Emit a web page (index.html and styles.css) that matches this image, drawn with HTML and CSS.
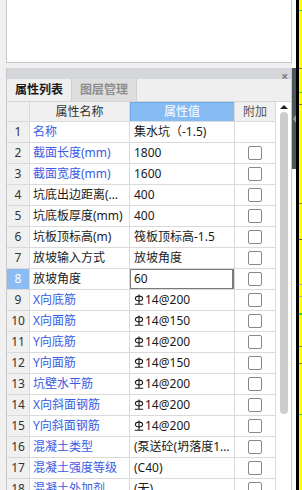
FILE: index.html
```html
<!DOCTYPE html>
<html lang="zh-CN">
<head>
    <meta charset="UTF-8">
    <meta name="viewport" content="width=device-width, initial-scale=1.0">
    <title>属性列表</title>
    <link rel="stylesheet" href="styles.css">
</head>
<body>
    <div class="main">
        <div class="preview"></div>
        <div class="panel">
            <div class="bar"><span class="close">×</span></div>
            <div class="tabs">
                <div class="tab active">属性列表</div>
                <div class="tab">图层管理</div>
            </div>
            <div class="grid">
                <div class="rows">
                    <div class="row head">
                        <div class="num"></div>
                        <div class="name">属性名称</div>
                        <div class="value">属性值</div>
                        <div class="extra">附加</div>
                    </div>
                    <div class="row">
                        <div class="num">1</div>
                        <div class="name blue">名称</div>
                        <div class="value">集水坑（-1.5)</div>
                        <div class="extra"></div>
                    </div>
                    <div class="row">
                        <div class="num">2</div>
                        <div class="name blue">截面长度(mm)</div>
                        <div class="value">1800</div>
                        <div class="extra"><span class="check"></span></div>
                    </div>
                    <div class="row">
                        <div class="num">3</div>
                        <div class="name blue">截面宽度(mm)</div>
                        <div class="value">1600</div>
                        <div class="extra"><span class="check"></span></div>
                    </div>
                    <div class="row">
                        <div class="num">4</div>
                        <div class="name">坑底出边距离(mm)</div>
                        <div class="value">400</div>
                        <div class="extra"><span class="check"></span></div>
                    </div>
                    <div class="row">
                        <div class="num">5</div>
                        <div class="name">坑底板厚度(mm)</div>
                        <div class="value">400</div>
                        <div class="extra"><span class="check"></span></div>
                    </div>
                    <div class="row">
                        <div class="num">6</div>
                        <div class="name">坑板顶标高(m)</div>
                        <div class="value">筏板顶标高-1.5</div>
                        <div class="extra"><span class="check"></span></div>
                    </div>
                    <div class="row">
                        <div class="num">7</div>
                        <div class="name">放坡输入方式</div>
                        <div class="value">放坡角度</div>
                        <div class="extra"><span class="check"></span></div>
                    </div>
                    <div class="row current">
                        <div class="num">8</div>
                        <div class="name">放坡角度</div>
                        <div class="value edit">60</div>
                        <div class="extra"><span class="check"></span></div>
                    </div>
                    <div class="row">
                        <div class="num">9</div>
                        <div class="name blue">X向底筋</div>
                        <div class="value"><svg class="bar-sym" viewBox="0 0 10 11"><ellipse cx="5" cy="4.5" rx="3.6" ry="2.4"/><path d="M5 0.5V10.5M0.8 10.3H9.2"/></svg>14@200</div>
                        <div class="extra"><span class="check"></span></div>
                    </div>
                    <div class="row">
                        <div class="num">10</div>
                        <div class="name blue">X向面筋</div>
                        <div class="value"><svg class="bar-sym" viewBox="0 0 10 11"><ellipse cx="5" cy="4.5" rx="3.6" ry="2.4"/><path d="M5 0.5V10.5M0.8 10.3H9.2"/></svg>14@150</div>
                        <div class="extra"><span class="check"></span></div>
                    </div>
                    <div class="row">
                        <div class="num">11</div>
                        <div class="name blue">Y向底筋</div>
                        <div class="value"><svg class="bar-sym" viewBox="0 0 10 11"><ellipse cx="5" cy="4.5" rx="3.6" ry="2.4"/><path d="M5 0.5V10.5M0.8 10.3H9.2"/></svg>14@200</div>
                        <div class="extra"><span class="check"></span></div>
                    </div>
                    <div class="row">
                        <div class="num">12</div>
                        <div class="name blue">Y向面筋</div>
                        <div class="value"><svg class="bar-sym" viewBox="0 0 10 11"><ellipse cx="5" cy="4.5" rx="3.6" ry="2.4"/><path d="M5 0.5V10.5M0.8 10.3H9.2"/></svg>14@150</div>
                        <div class="extra"><span class="check"></span></div>
                    </div>
                    <div class="row">
                        <div class="num">13</div>
                        <div class="name blue">坑壁水平筋</div>
                        <div class="value"><svg class="bar-sym" viewBox="0 0 10 11"><ellipse cx="5" cy="4.5" rx="3.6" ry="2.4"/><path d="M5 0.5V10.5M0.8 10.3H9.2"/></svg>14@200</div>
                        <div class="extra"><span class="check"></span></div>
                    </div>
                    <div class="row">
                        <div class="num">14</div>
                        <div class="name blue">X向斜面钢筋</div>
                        <div class="value"><svg class="bar-sym" viewBox="0 0 10 11"><ellipse cx="5" cy="4.5" rx="3.6" ry="2.4"/><path d="M5 0.5V10.5M0.8 10.3H9.2"/></svg>14@200</div>
                        <div class="extra"><span class="check"></span></div>
                    </div>
                    <div class="row">
                        <div class="num">15</div>
                        <div class="name blue">Y向斜面钢筋</div>
                        <div class="value"><svg class="bar-sym" viewBox="0 0 10 11"><ellipse cx="5" cy="4.5" rx="3.6" ry="2.4"/><path d="M5 0.5V10.5M0.8 10.3H9.2"/></svg>14@200</div>
                        <div class="extra"><span class="check"></span></div>
                    </div>
                    <div class="row">
                        <div class="num">16</div>
                        <div class="name blue">混凝土类型</div>
                        <div class="value">(泵送砼(坍落度175~190mm))</div>
                        <div class="extra"><span class="check"></span></div>
                    </div>
                    <div class="row">
                        <div class="num">17</div>
                        <div class="name blue">混凝土强度等级</div>
                        <div class="value">(C40)</div>
                        <div class="extra"><span class="check"></span></div>
                    </div>
                    <div class="row">
                        <div class="num">18</div>
                        <div class="name blue">混凝土外加剂</div>
                        <div class="value">(无)</div>
                        <div class="extra"><span class="check"></span></div>
                    </div>
                </div>
                <div class="scroll">
                    <div class="arrow"></div>
                    <div class="thumb"></div>
                </div>
            </div>
        </div>
    </div>
    <div class="splitter">
        <div class="handle"><span class="tri"></span></div>
    </div>
    <div class="edge"></div>
    <div class="ruler"></div>
</body>
</html>
```

FILE: styles.css
```css
body{
    margin: 0;
    width: 302px;
    height: 490px;
    overflow: hidden;
    display: flex;
    background-color: #f0f0f0;
    font-family: "Noto Sans", "Noto Sans CJK SC", sans-serif;
    font-size: 12px;
    color: #1a1a1a;
}

.main{
    width: 286px;
    padding-left: 6px;
    display: flex;
    flex-direction: column;
}

.preview{
    height: 63px;
    box-sizing: border-box;
    background-color: #fff;
    border: 1px solid #c8c8c8;
    border-top: none;
}

.panel{
    margin-top: 5px;
    flex: 1;
    min-height: 0;
    display: flex;
    flex-direction: column;
    background-color: #fff;
    border-left: 1px solid #c8c8c8;
    border-right: 1px solid #c8c8c8;
}

.bar{
    height: 11px;
    background-color: #d4d6da;
    text-align: right;
    padding-right: 3px;
}

.close{
    color: #7d7f83;
    font-size: 12px;
    line-height: 11px;
    font-weight: bold;
}

.tabs{
    height: 22px;
    display: flex;
    background-color: #efefef;
    border-bottom: 1px solid #d6d6d6;
}

.tab{
    width: 64px;
    line-height: 22px;
    text-align: center;
    font-weight: bold;
    color: #8e8e8e;
    background-color: #dedede;
    border-right: 1px solid #d0d0d0;
}

.tab.active{
    color: #1a1a1a;
    background-color: #efefef;
}

.grid{
    flex: 1;
    display: flex;
    overflow: hidden;
}

.rows{
    width: 269px;
}

.row{
    height: 21px;
    display: flex;
    box-sizing: border-box;
    border-bottom: 1px solid #dadada;
}

.row > div{
    box-sizing: border-box;
    border-right: 1px solid #dadada;
    line-height: 20px;
    white-space: nowrap;
    overflow: hidden;
    text-overflow: ellipsis;
}

.num{
    width: 23px;
    text-align: center;
    background-color: #f0f0f0;
    color: #333;
}

.name{
    width: 100px;
    padding-left: 3px;
}

.value{
    width: 105px;
    padding-left: 4px;
    position: relative;
}

.extra{
    width: 41px;
    display: flex;
    justify-content: center;
    align-items: center;
}

.blue{
    color: #3a5be4;
}

.row.head{
    height: 20px;
}

.row.head > div{
    line-height: 19px;
    background-color: #f0f0f0;
    text-align: center;
    padding-left: 0;
    color: #333;
}

.row.head .value{
    background-color: #87bbf4;
    box-shadow: inset 1px 1px 0 #6ca7ec;
    color: #fff;
}

.row.head .extra{
    color: #555;
}

.row.current .num{
    background-color: #8bbcf3;
    color: #fff;
}

.value.edit::after{
    content: "";
    position: absolute;
    left: -1px;
    top: -1px;
    right: 0;
    bottom: -1px;
    border: 2px solid #7b7b7b;
}

.check{
    width: 12px;
    height: 12px;
    border: 1px solid #888;
    border-radius: 2px;
    background-color: #fff;
    margin-top: -1px;
}

.bar-sym{
    width: 10px;
    height: 11px;
    margin-right: 1px;
    vertical-align: -1px;
    fill: none;
    stroke: #1a1a1a;
    stroke-width: 1.1;
}

.scroll{
    width: 15px;
    background-color: #fff;
}

.arrow{
    width: 0;
    height: 0;
    margin: 3px auto 0;
    border-left: 4px solid transparent;
    border-right: 4px solid transparent;
    border-bottom: 4px solid #222;
}

.thumb{
    width: 8px;
    height: 302px;
    margin: 3px 0 0 4px;
    border-radius: 4px;
    background-color: #cdcdcd;
}

.splitter{
    width: 4px;
    background-color: #fff;
}

.handle{
    margin-top: 68px;
    height: 101px;
    background-color: #4f555c;
    display: flex;
    align-items: center;
    justify-content: center;
}

.tri{
    width: 0;
    height: 0;
    border-top: 4px solid transparent;
    border-bottom: 4px solid transparent;
    border-right: 3px solid #9ba1a7;
}

.edge{
    width: 3px;
    background-color: #000;
}

.ruler{
    width: 3px;
    background: linear-gradient(to bottom,
        #ff0 0, #ff0 10px, #3c3 10px, #3c3 11px,
        #ff0 11px, #ff0 68px, #8a6a30 68px, #8a6a30 69px,
        #ff0 69px, #ff0 92px, #3c3 92px, #3c3 93px,
        #ff0 93px, #ff0 104px, #8a6a30 104px, #8a6a30 105px,
        #ff0 105px, #ff0 203px, #8a8a30 203px, #8a8a30 204px,
        #ff0 204px, #ff0 239px, #6a5a30 239px, #6a5a30 240px,
        #ff0 240px, #ff0 284px, #a0a0a0 284px, #a0a0a0 285px,
        #ff0 285px, #ff0 296px, #b0b080 296px, #b0b080 297px,
        #ff0 297px, #ff0 313px, #3c3 313px, #3c3 315px,
        #ff0 315px, #ff0 346px, #a07040 346px, #a07040 347px,
        #ff0 347px, #ff0 363px, #a07040 363px, #a07040 364px,
        #ff0 364px, #ff0 414px, #3c3 414px, #3c3 415px,
        #ff0 415px);
}
```
